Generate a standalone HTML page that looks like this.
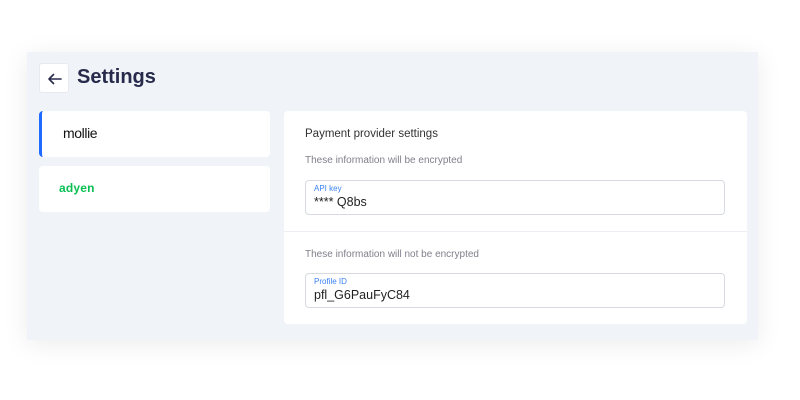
<!DOCTYPE html>
<html><head><style>
*{margin:0;padding:0;box-sizing:border-box}
body{width:800px;height:400px;background:#fff;font-family:"Liberation Sans",sans-serif;position:relative;overflow:hidden}
.panel{position:absolute;left:27px;top:52px;width:731px;height:288px;background:#f0f4f8;box-shadow:0 4px 24px rgba(0,0,0,.08)}
.back{position:absolute;left:39px;top:63px;width:30px;height:30px;background:#fff;border-radius:3px;border:1px solid #e6e9ef}
.title{position:absolute;left:77px;top:66px;font-size:20px;font-weight:bold;color:#272a4a}
.card{position:absolute;left:39px;width:231px;height:46px;background:#fff;border-radius:4px}
.main{position:absolute;left:284px;top:111px;width:463px;height:213px;background:#fff;border-radius:4px}
.t{position:absolute;left:21px;font-size:11.5px;color:#333}
.s{position:absolute;left:21px;font-size:10px;color:#80808c}
.in{position:absolute;left:21px;width:420px;border:1px solid #d6d9df;border-radius:4px;background:#fff}
.in .l{position:absolute;left:8px;top:3px;font-size:8px;color:#3b82f6}
.in .v{position:absolute;left:8px;top:14px;font-size:12.5px;color:#222}
</style></head><body>
<div class="panel"></div>
<div class="back"><svg width="30" height="30" viewBox="0 0 30 30"><path d="M9 15H21M9 15L13.5 10.5M9 15L13.5 19.5" stroke="#272a4a" stroke-width="1.6" fill="none" stroke-linecap="round"/></svg></div>
<div class="title">Settings</div>
<div class="card" style="top:111px;border-left:3px solid #1f6bff"><span style="position:absolute;left:21px;top:14px;font-size:14px;color:#111;letter-spacing:-.4px">mollie</span></div>
<div class="card" style="top:166px"><span style="position:absolute;left:20px;top:15px;font-size:12px;font-weight:bold;color:#0abf53;letter-spacing:.2px">adyen</span></div>
<div class="main">
<div class="t" style="top:17px">Payment provider settings</div>
<div class="s" style="top:44px">These information will be encrypted</div>
<div class="in" style="top:69px;height:35px"><div class="l">API key</div><div class="v">**** Q8bs</div></div>
<div style="position:absolute;left:0;right:0;top:120px;height:1px;background:#eceff3"></div>
<div class="s" style="top:138px">These information will not be encrypted</div>
<div class="in" style="top:162px;height:35px"><div class="l">Profile ID</div><div class="v">pfl_G6PauFyC84</div></div>
</div>
</body></html>
